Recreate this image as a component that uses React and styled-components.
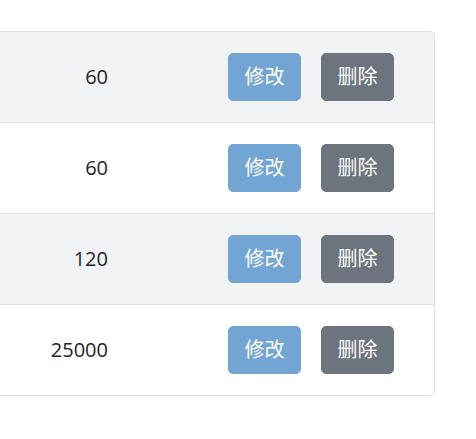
import React from "react";
import styled, { createGlobalStyle } from "styled-components";

const GlobalStyle = createGlobalStyle`
   body {
      margin: 0;
      background: #ffffff;
      font-family: "Open Sans", "Noto Sans CJK SC", sans-serif;
      color: #212529;
   }
`;

const rows = [60, 60, 120, 25000];

const App = () => {
   return (
      <Page>
         <GlobalStyle />
         <Card>
            {rows.map((value, i) => (
               <Row key={i} striped={i % 2 === 0}>
                  <Amount>{value}</Amount>
                  <Actions>
                     <Button variant="edit">修改</Button>
                     <Button variant="delete">删除</Button>
                  </Actions>
               </Row>
            ))}
         </Card>
      </Page>
   );
};

const Page = styled.div`
   padding-top: 31px;
   width: 476px;
`;

const Card = styled.div`
   width: 434px;
   border: 1px solid #dcdfe3;
   border-left: none;
   border-radius: 0 5px 5px 0;
   overflow: hidden;
`;

const Row = styled.div.withConfig({ shouldForwardProp: (p) => p !== "striped" })`
   display: flex;
   align-items: center;
   height: 90px;
   background: ${(p) => (p.striped ? "#f2f3f5" : "#ffffff")};
   & + & {
      border-top: 1px solid #dcdfe3;
   }
`;

const Amount = styled.div`
   width: 108px;
   text-align: right;
   font-size: 20px;
   line-height: 30px;
   color: #212529;
`;

const Actions = styled.div`
   margin-left: auto;
   display: flex;
   gap: 20px;
   padding-right: 40px;
`;

const Button = styled.button`
   font-family: "Open Sans", "Noto Sans CJK SC", sans-serif;
   font-size: 20px;
   line-height: 30px;
   padding: 8px 15.5px;
   border-radius: 5px;
   color: #ffffff;
   border: 1px solid ${(p) => (p.variant === "edit" ? "#73a5d4" : "#6c757d")};
   background: ${(p) => (p.variant === "edit" ? "#73a5d4" : "#6c757d")};
   cursor: pointer;
`;

export default App;
